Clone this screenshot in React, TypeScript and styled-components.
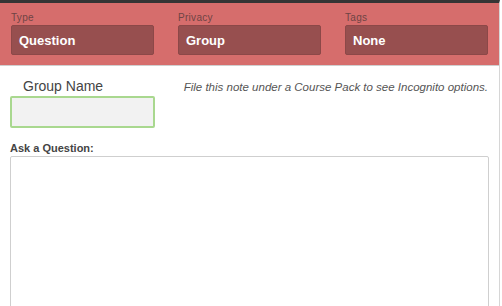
import React from "react"
import styled, { createGlobalStyle } from "styled-components"

const GlobalStyle = createGlobalStyle`
    body {
        margin: 0;
        background: #ffffff;
        font-family: "Liberation Sans", Arial, sans-serif;
        overflow: hidden;
    }
`

const Page = styled.div`
    width: 500px;
    height: 306px;
    border-right: 1px solid #d6d6d6;
    border-top: 3px solid #353535;
    box-sizing: border-box;
    overflow: hidden;
`

const Banner = styled.div`
    display: flex;
    gap: 24px;
    padding: 8px 0 10px 11px;
    background: #d66d6c;
    border-bottom: 1px solid #cfcfcf;
    height: 63px;
    box-sizing: border-box;
`

const Field = styled.div`
    display: flex;
    flex-direction: column;
    width: 143px;
`

const FieldLabel = styled.label`
    font-size: 10px;
    line-height: 14px;
    letter-spacing: 0.3px;
    color: #6e4444;
`

const Select = styled.div`
    height: 30px;
    box-sizing: border-box;
    background: #974f4f;
    border: 1px solid #8c4848;
    border-radius: 2px;
    padding: 0 7px;
    display: flex;
    align-items: center;
    color: #ffffff;
    font-weight: bold;
    font-size: 13px;
`

const Body = styled.div`
    padding: 0 11px 0 10px;
`

const GroupRow = styled.div`
    display: flex;
    justify-content: space-between;
    padding-top: 12px;
`

const GroupCol = styled.div`
    display: flex;
    flex-direction: column;
`

const GroupLabel = styled.label`
    font-size: 14px;
    line-height: 16px;
    color: #444444;
    padding-left: 13px;
    margin-bottom: 2px;
`

const GroupInput = styled.input`
    width: 145px;
    height: 32px;
    box-sizing: border-box;
    background: #f2f2f2;
    border: 2px solid #a9d88f;
    border-radius: 2px;
    outline: none;
`

const Hint = styled.p`
    margin: 3px 0 0;
    font-size: 11.5px;
    font-style: italic;
    color: #555555;
`

const QuestionLabel = styled.div`
    margin-top: 14px;
    font-size: 11px;
    font-weight: bold;
    color: #444444;
    line-height: 13px;
`

const QuestionBox = styled.textarea`
    display: block;
    margin-top: 1px;
    width: 479px;
    height: 200px;
    box-sizing: border-box;
    border: 1px solid #cfcfcf;
    border-radius: 2px;
    resize: none;
    outline: none;
`

const fields = [
    { label: "Type", value: "Question" },
    { label: "Privacy", value: "Group" },
    { label: "Tags", value: "None" },
]

function App() {
    return (
        <Page>
            <GlobalStyle />
            <Banner>
                {fields.map((f) => (
                    <Field key={f.label}>
                        <FieldLabel>{f.label}</FieldLabel>
                        <Select>{f.value}</Select>
                    </Field>
                ))}
            </Banner>
            <Body>
                <GroupRow>
                    <GroupCol>
                        <GroupLabel>Group Name</GroupLabel>
                        <GroupInput type="text" />
                    </GroupCol>
                    <Hint>File this note under a Course Pack to see Incognito options.</Hint>
                </GroupRow>
                <QuestionLabel>Ask a Question:</QuestionLabel>
                <QuestionBox />
            </Body>
        </Page>
    )
}

export default App
